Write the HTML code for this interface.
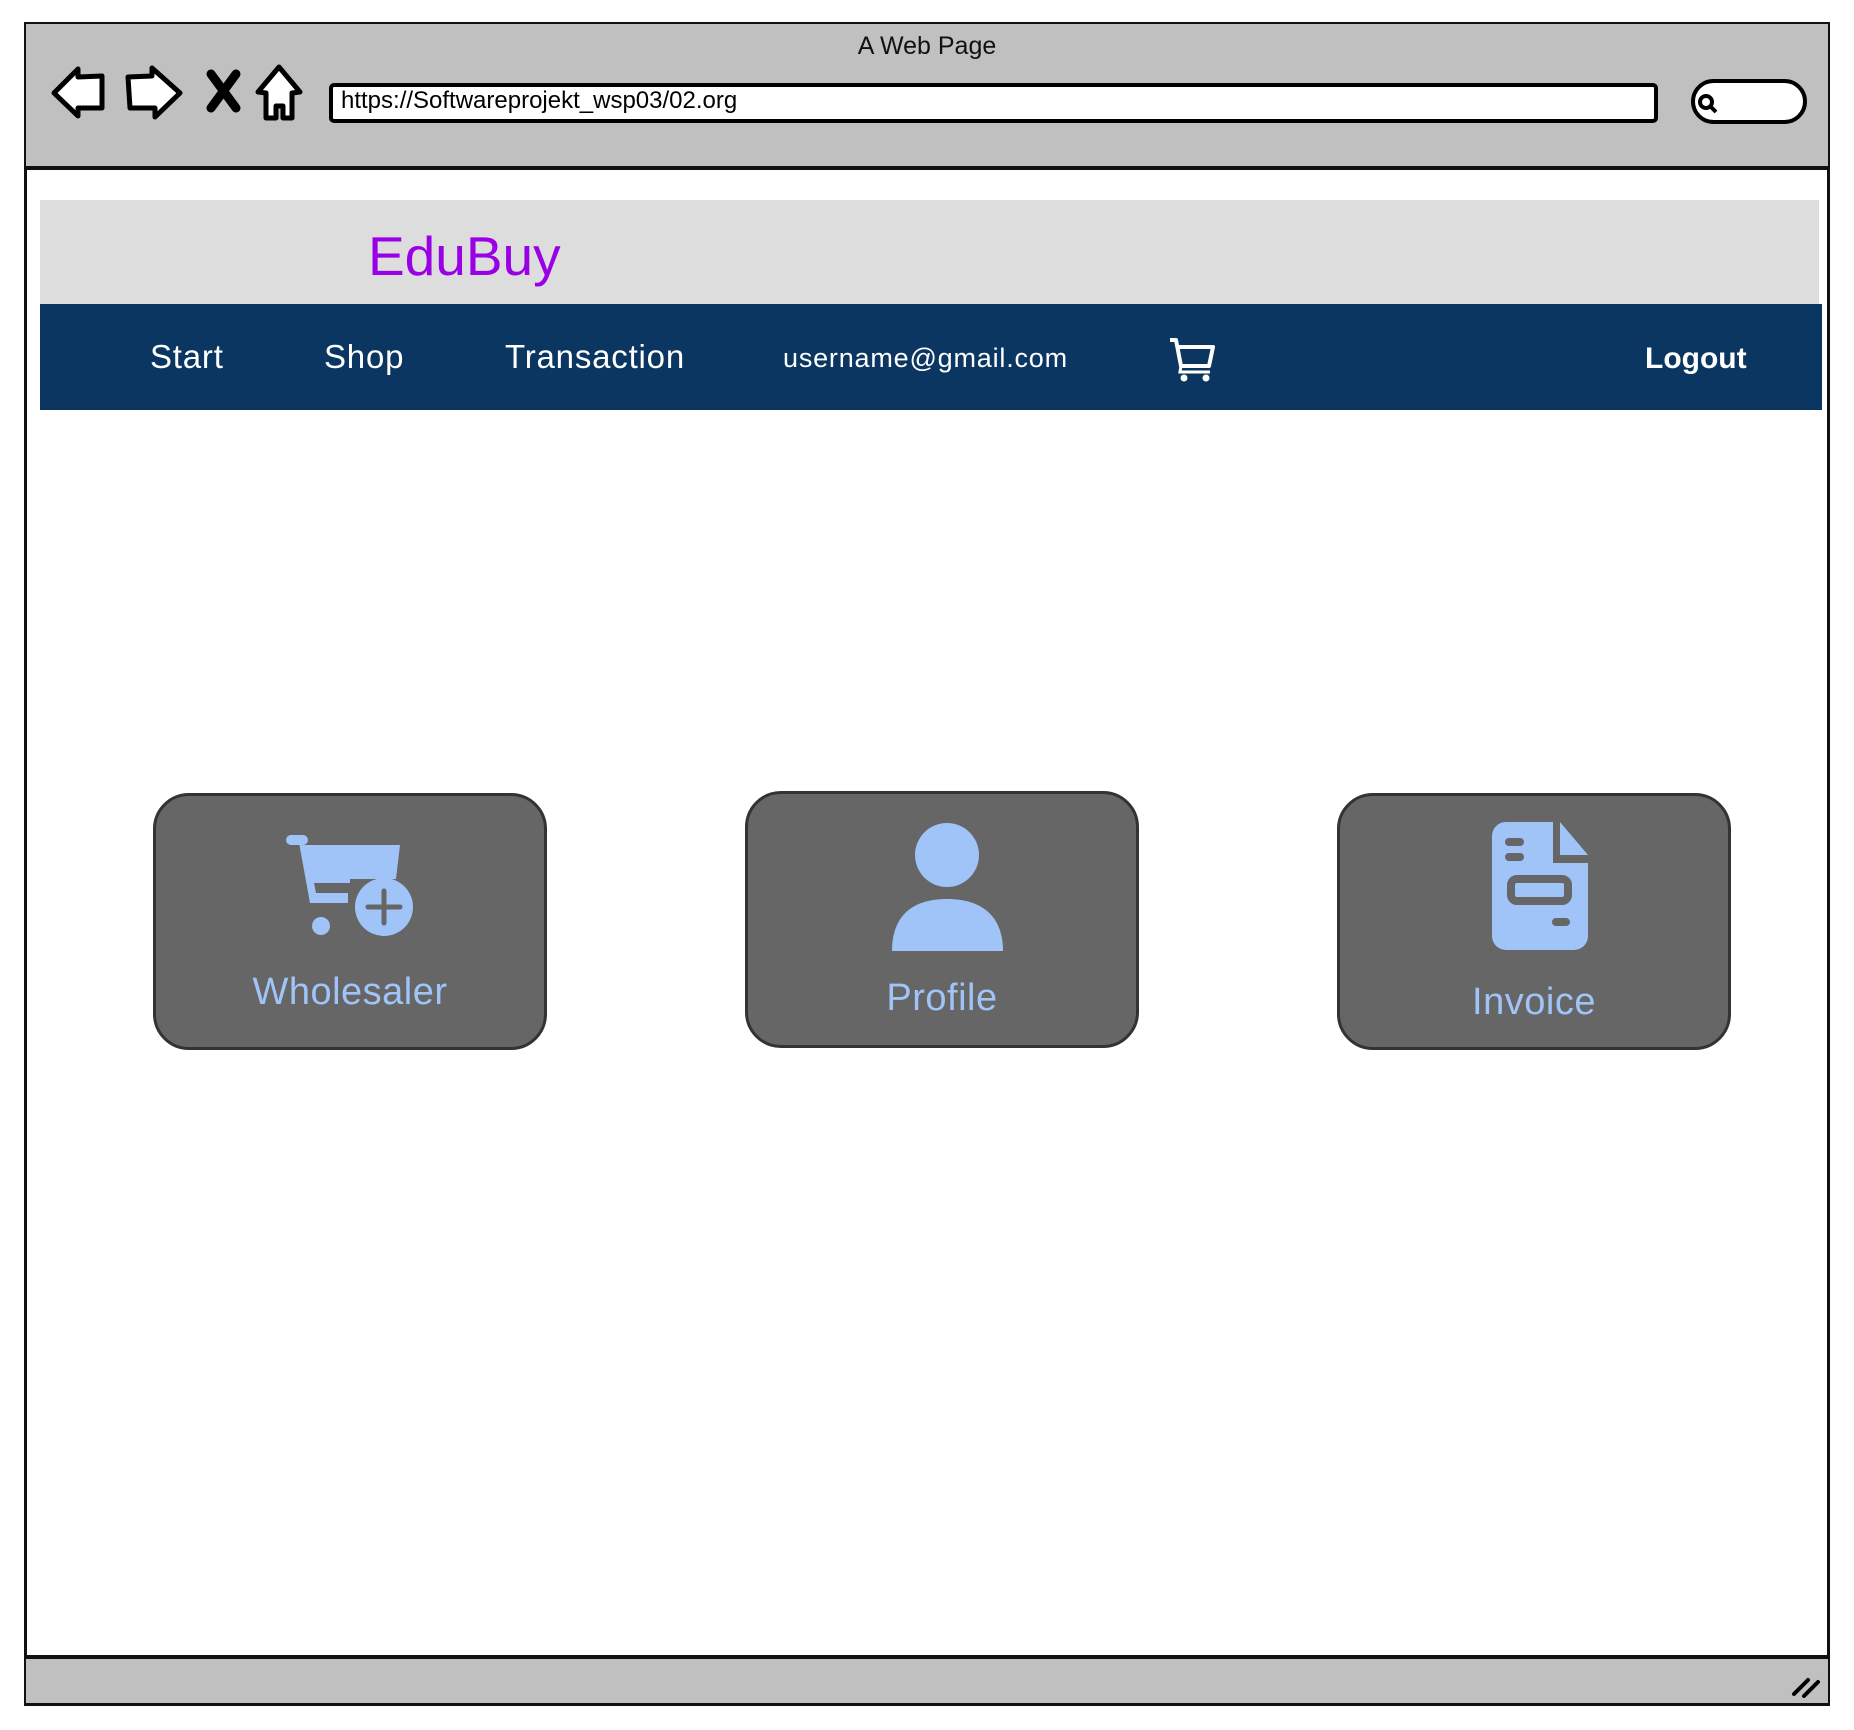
<!DOCTYPE html>
<html><head><meta charset="utf-8"><style>
html,body{margin:0;padding:0;background:#fff;width:1854px;height:1730px;overflow:hidden;font-family:"Liberation Sans",sans-serif}
.a{position:absolute}
.card{position:absolute;background:#666;border:3px solid #333;border-radius:36px;box-sizing:border-box}
.lbl{position:absolute;left:0;right:0;text-align:center;color:#a0c4f8;font-size:38px;letter-spacing:0.5px}
.nav{position:absolute;color:#fff;font-size:33px;top:338px;letter-spacing:0.8px}
</style></head><body>
<div class="a" style="left:24px;top:22px;width:1806px;height:1684px;border:3px solid #111;box-sizing:border-box"></div>
<div class="a" style="left:26px;top:24px;width:1802px;height:142px;background:#c0c0c0;border-bottom:4px solid #111"></div>
<div class="a" style="left:0;width:1854px;top:32px;text-align:center;font-size:25px;color:#111">A Web Page</div>
<svg class="a" style="left:0;top:0" width="360" height="140">
<g fill="#fff" stroke="#000" stroke-width="5" stroke-linejoin="round">
<polygon points="54,93 78,69 78,77 102,76 102,108 78,108 78,116"/>
<polygon points="128,77 152,76 152,68 180,93 155,117 155,108 130,108"/>
<polygon points="279,67 258,92 266,93 266,118 276,118 276,106 283,106 283,118 292,118 292,93 300,92"/>
</g>
<path d="M211,74 L236,108 M236,74 L211,108" stroke="#000" stroke-width="9" stroke-linecap="round"/>
</svg>
<div class="a" style="left:329px;top:83px;width:1329px;height:40px;background:#fff;border:4px solid #000;border-radius:5px;box-sizing:border-box"></div>
<div class="a" style="left:341px;top:87px;font-size:24px;color:#000">https://Softwareprojekt_wsp03/02.org</div>
<div class="a" style="left:1691px;top:79px;width:116px;height:45px;background:#fff;border:4px solid #000;border-radius:23px;box-sizing:border-box"></div>
<svg class="a" style="left:1696px;top:92px" width="24" height="24"><circle cx="10" cy="10" r="6" fill="none" stroke="#000" stroke-width="4"/><path d="M14,14 L20,20" stroke="#000" stroke-width="4"/></svg>
<div class="a" style="left:40px;top:200px;width:1779px;height:104px;background:#dddddd"></div>
<div class="a" style="left:368px;top:224px;font-size:55px;color:#9a00e6">EduBuy</div>
<div class="a" style="left:40px;top:304px;width:1782px;height:106px;background:#0a3661"></div>
<div class="nav" style="left:150px">Start</div>
<div class="nav" style="left:324px">Shop</div>
<div class="nav" style="left:505px">Transaction</div>
<div class="nav" style="left:783px;font-size:27px;top:343px">username@gmail.com</div>
<div class="nav" style="left:1645px;font-weight:bold;font-size:30px;top:342px;letter-spacing:0">Logout</div>
<svg class="a" style="left:1166px;top:336px" width="52" height="48"><path d="M4,4 H10 L15,30 H43 L47,11 H12" fill="none" stroke="#fff" stroke-width="4" stroke-linejoin="round"/><path d="M15,30 L14,36 H44" fill="none" stroke="#fff" stroke-width="3"/><circle cx="18" cy="42" r="3.5" fill="#fff"/><circle cx="40" cy="42" r="3.5" fill="#fff"/></svg>

<div class="card" style="left:153px;top:793px;width:394px;height:257px"><div class="lbl" style="top:175px">Wholesaler</div></div>
<div class="card" style="left:745px;top:791px;width:394px;height:257px"><div class="lbl" style="top:183px">Profile</div></div>
<div class="card" style="left:1337px;top:793px;width:394px;height:257px"><div class="lbl" style="top:185px">Invoice</div></div>

<svg class="a" style="left:284px;top:833px" width="134" height="105"><g fill="#a0c4f8">
<rect x="2" y="2" width="22" height="10" rx="5"/>
<path d="M14,4 L26,70 H64 V60 H32 L30,50 H66 L66,46 L112,46 L116,12 H20 Z"/>
<circle cx="37" cy="93" r="9"/>
<circle cx="100" cy="74" r="29"/></g>
<path d="M100,58 V90 M84,74 H116" stroke="#666" stroke-width="5" stroke-linecap="round"/>
</svg>
<svg class="a" style="left:890px;top:823px" width="116" height="130"><g fill="#a0c4f8">
<circle cx="57" cy="32" r="32"/>
<path d="M2,128 C2,95 20,76 57,76 C94,76 113,95 113,128 Z"/></g></svg>
<svg class="a" style="left:1491px;top:821px" width="100" height="131"><path d="M16,1 H62 V42 H97 V115 A14,14 0 0 1 83,129 H15 A14,14 0 0 1 1,115 V15 A14,14 0 0 1 16,1 Z" fill="#a0c4f8"/>
<path d="M69,1 L97,34 H69 Z" fill="#a0c4f8"/>
<g stroke="#666" stroke-width="8" stroke-linecap="round" fill="none"><path d="M18,21 H29 M18,36 H29 M65,101 H75"/><rect x="20" y="58" width="57" height="22" rx="6" stroke-width="8"/></g></svg>

<div class="a" style="left:26px;top:1655px;width:1802px;height:44px;background:#c0c0c0;border-top:4px solid #111"></div>
<svg class="a" style="left:1790px;top:1670px" width="32" height="30"><path d="M4,24 L18,10 M14,26 L28,12" stroke="#000" stroke-width="4" stroke-linecap="round"/></svg>
</body></html>
